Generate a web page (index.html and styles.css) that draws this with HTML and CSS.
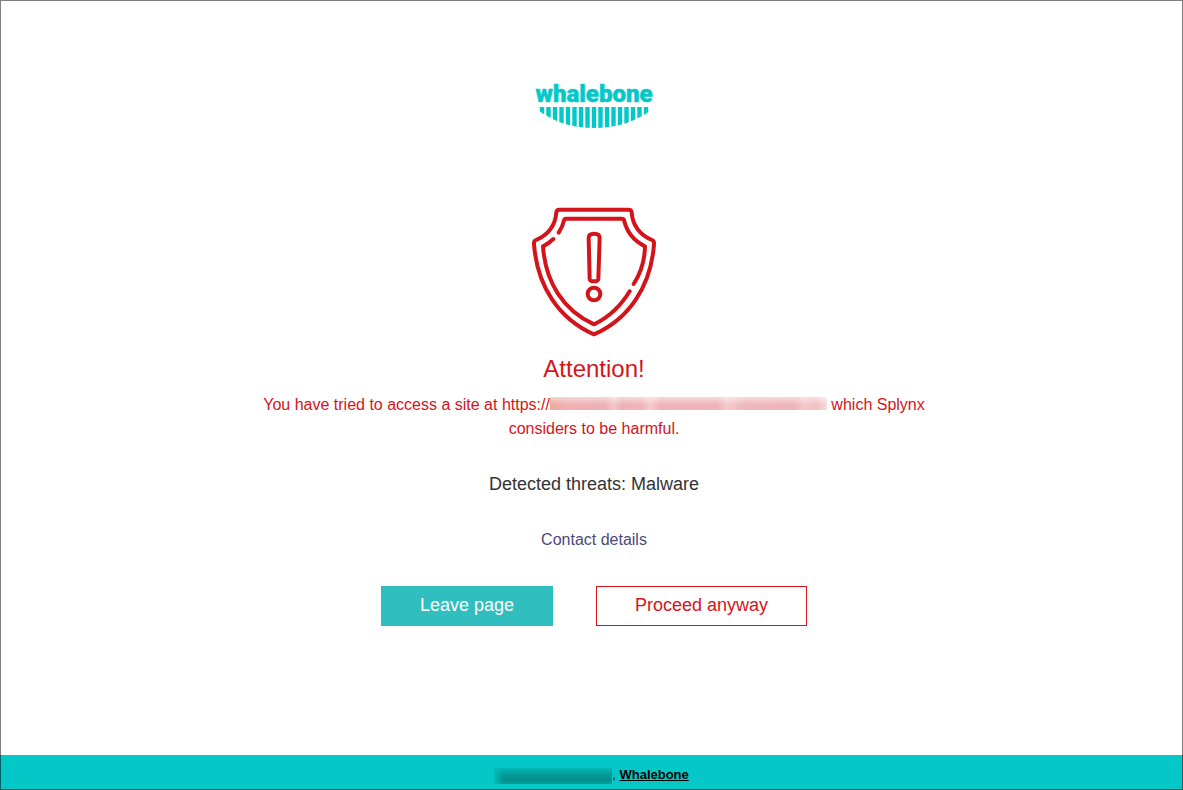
FILE: index.html
```html
<!DOCTYPE html>
<html lang="en">
<head>
  <meta charset="UTF-8">
  <title>Attention!</title>
  <meta name="viewport" content="width=device-width, initial-scale=1.0">
  <link rel="stylesheet" href="styles.css">
</head>
<body>

<main class="content">
  <svg class="logo" viewBox="0 0 140 64" role="img" aria-label="whalebone">
    <text class="logo-text" x="70" y="28" text-anchor="middle">whalebone</text>
    <!-- Baleen -->
    <clipPath id="baleen">
      <path d="M15 33H126V37C108 49 92 54 70 54S33 49 15 37Z"/>
    </clipPath>
    <path class="logo-baleen" clip-path="url(#baleen)" d="M18 33V60M24.5 33V60M31 33V60M37.5 33V60M44 33V60M50.5 33V60M57 33V60M63.5 33V60M70 33V60M76.5 33V60M83 33V60M89.5 33V60M96 33V60M102.5 33V60M109 33V60M115.5 33V60M122 33V60"/>
  </svg>

  <svg class="shield" viewBox="0 0 420 432" aria-hidden="true">
    <path d="M106 29H314Q322 29 323 37C326 78 347 104 384 120Q391 123 390 132C381 258 316 356 210 403C104 356 39 258 30 132Q29 123 36 120C73 104 94 78 97 37Q98 29 106 29Z"/>
    <path d="M104 98Q116 80 120 61Q121 56 126 56H294Q299 56 300 61C309 97 329 123 363 139Q362 201 329 252"/>
    <path d="M88 117Q74 131 57 139C64 245 117 331 210 373C253 353 289 320 317 274"/>
    <path d="M194 114Q194 101 210 101Q227 101 227 114L223 236Q222 244 210 244Q198 244 197 236Z"/>
    <circle cx="210" cy="282" r="19"/>
  </svg>

  <h1>Attention!</h1>
  <p class="message">You have tried to access a site at https://<span class="hidden-url"></span> which Splynx considers to be harmful.</p>
  <p class="threats">Detected threats: Malware</p>
  <a href="#" class="contact">Contact details</a>

  <div class="buttons">
    <button type="button" class="btn btn-leave">Leave page</button>
    <button type="button" class="btn btn-proceed">Proceed anyway</button>
  </div>
</main>

<footer>
  <span class="hidden-mail"></span>, <a href="#">Whalebone</a>
</footer>

</body>
</html>
```

FILE: styles.css
```css
:root {
  --danger: #d4141b;
  --teal: #04c8c8;
}

* {
  margin: 0;
  padding: 0;
  box-sizing: border-box;
}

body {
  font-family: "Liberation Sans", Arial, sans-serif;
  font-size: 16px;
  line-height: 24px;
  background: #fff;
  min-height: 100vh;
  display: flex;
  flex-direction: column;
}

/* Thin frame around the whole page */
body::after {
  content: "";
  position: fixed;
  inset: 0;
  border: 1px solid rgba(0, 0, 0, 0.5);
  pointer-events: none;
}

.content {
  flex: 1;
  display: flex;
  flex-direction: column;
  align-items: center;
  text-align: center;
  padding: 74px 16px 40px 21px;
}

.logo {
  width: 140px;
  height: 64px;
  margin-bottom: 62px;
}

.logo-text {
  font-family: Roboto, sans-serif;
  font-size: 24px;
  font-weight: 900;
  fill: var(--teal);
  stroke: var(--teal);
  stroke-width: 0.5;
  stroke-linejoin: round;
}

.logo-baleen {
  stroke: var(--teal);
  stroke-width: 4.4;
}

.shield {
  width: 140px;
  height: 144px;
  margin-bottom: 9px;
  fill: none;
  stroke: var(--danger);
  stroke-width: 12;
  stroke-linecap: round;
  stroke-linejoin: round;
}

h1 {
  font-size: 24px;
  font-weight: normal;
  line-height: 32px;
  color: var(--danger);
  margin-bottom: 8px;
}

.message {
  max-width: 720px;
  color: var(--danger);
  margin-bottom: 31px;
}

.hidden-url {
  display: inline-block;
  width: 277px;
  height: 13px;
  background:
    linear-gradient(rgba(255, 255, 255, 0.5), transparent 60%),
    linear-gradient(90deg, #f0a898, #eeb0b3 5%, #edb0b4 20%, #f3c6ca 23%, #eeb2b6 26%, #efb4b8 33%, #f4cbcf 36%, #efb4b9 40%, #eeb3b8 60%, #f3cacd 64%, #efb8bc 70%, #eeb4b8 88%, #f3c8cb 92%, #f0bfc2 96%, #f7dcdd);
}

.threats {
  font-size: 18px;
  color: #333;
  margin-bottom: 32px;
}

.contact {
  color: #4a4a7c;
  text-decoration: none;
  margin-bottom: 34px;
}

.buttons {
  display: flex;
  flex-wrap: wrap;
  justify-content: center;
  gap: 43px;
}

.btn {
  font-family: inherit;
  font-size: 18px;
  line-height: 24px;
  padding: 6px 38px 8px;
  border: 1px solid var(--danger);
  cursor: pointer;
}

.btn-leave {
  background: #30bebe;
  border-color: #30bebe;
  color: #fff;
}

.btn-proceed {
  background: #fff;
  color: var(--danger);
}

footer {
  background: var(--teal);
  color: #111;
  font-size: 13px;
  line-height: 18px;
  text-align: center;
  padding: 11px 0 6px;
}

footer a {
  color: #000;
  font-weight: bold;
}

.hidden-mail {
  display: inline-block;
  width: 118px;
  height: 16px;
  vertical-align: middle;
  background:
    linear-gradient(90deg, #04bcba, transparent 8%),
    linear-gradient(#04b8b6, #049a96 45%, #048e8a 75%, #04a09c);
}
```
